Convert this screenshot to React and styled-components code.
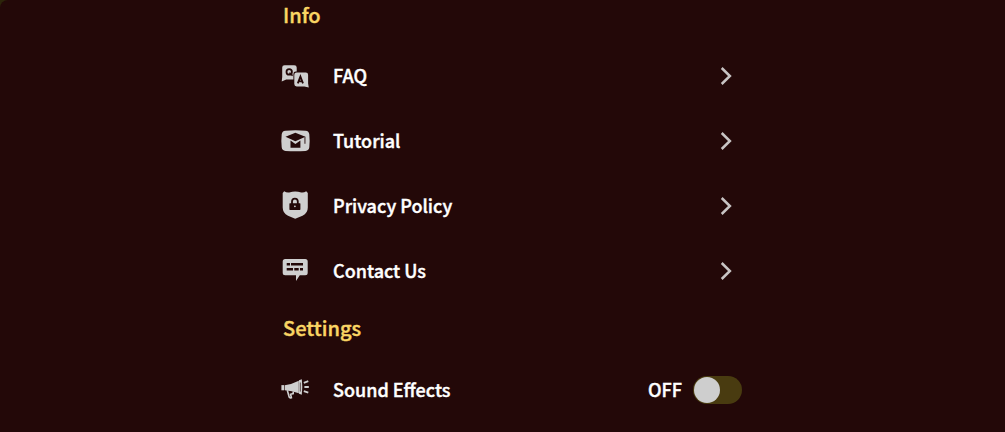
import { useState } from "react";
import styled, { createGlobalStyle } from "styled-components";

const ink = "#230808";

function FaqIcon() {
  return (
    <Icon viewBox="0 0 31 31" aria-hidden="true">
      <path d="M4.5 5.2H14.3Q16.7 5.2 16.7 7.6V11.6H15.8Q13.4 11.6 13.4 14V19.6H6.2L1.7 21.4L2.2 17V7.6Q2.2 5.2 4.5 5.2Z" />
      <path d="M16.7 12.5H25.8Q28.1 12.5 28.1 14.8V23.5L28.8 27.6L24.3 26.4H16.7Q14.3 26.4 14.3 24V14.8Q14.3 12.5 16.7 12.5Z" />
      <circle cx="9.2" cy="11.9" r="2.7" fill="none" stroke={ink} strokeWidth="1.8" />
      <path d="M9.4 12.7L12.6 15.6" stroke={ink} strokeWidth="1.5" />
      <path
        d="M17.8 23.4L20.4 16.6L23 23.4M18.8 21.4H22"
        fill="none"
        stroke={ink}
        strokeWidth="1.8"
      />
    </Icon>
  );
}

function TutorialIcon() {
  return (
    <Icon viewBox="0 0 31 31" aria-hidden="true">
      <path d="M5.5 5.7Q15.5 4.8 25.5 5.7Q29 6 29.3 9.3Q30 15.8 29.3 22.3Q29 25.6 25.5 25.9Q15.5 26.8 5.5 25.9Q2 25.6 1.7 22.3Q1 15.8 1.7 9.3Q2 6 5.5 5.7Z" />
      <g fill={ink}>
        <path d="M15.4 7.7L25.4 11.8L15.4 16.2L5.5 11.8Z" />
        <path d="M10.5 15.6L15.4 19L20.4 15.6V22.8H10.5Z" />
        <path d="M24.5 11.8H25.4V18.8H24.5Z" />
      </g>
    </Icon>
  );
}

function PrivacyIcon() {
  return (
    <Icon viewBox="0 0 31 31" aria-hidden="true">
      <path d="M4.2 1.3Q6.5 2.8 9.2 2.4Q12.4 1.6 15.2 1.6Q18 1.6 21.2 2.4Q23.9 2.8 26.2 1.3L27.8 3V17.5Q27.8 23.3 22.5 25.8L15.2 28.8L8 25.8Q2.7 23.3 2.7 17.5V3Z" />
      <path
        d="M12 14V11.5A2.9 2.9 0 0 1 17.8 11.5V14"
        fill="none"
        stroke={ink}
        strokeWidth="1.8"
      />
      <rect x="9.4" y="13.2" width="11" height="6.7" rx="0.6" fill={ink} />
      <circle cx="14.9" cy="16.3" r="0.9" />
    </Icon>
  );
}

function ContactIcon() {
  return (
    <Icon viewBox="0 0 31 31" aria-hidden="true">
      <path d="M5.2 4H25.2Q27.7 4 27.7 6.5V17.8Q27.7 20.3 25.2 20.3H19.8L16 26V20.3H5.2Q2.7 20.3 2.7 17.8V6.5Q2.7 4 5.2 4Z" />
      <path
        d="M6.7 8H10V10.6H6.7ZM11 8H23V10.6H11ZM6.7 13H13V15.5H6.7ZM14.3 13H18.7V15.5H14.3ZM20 13H23V15.5H20Z"
        fill={ink}
      />
    </Icon>
  );
}

function SoundIcon() {
  return (
    <Icon viewBox="0 0 31 31" aria-hidden="true">
      <path d="M1.4 11.1H4.1V16.3H1.4Z" />
      <path d="M4.7 11.2Q12 10.4 18.8 6.8V19.2Q12 16.6 4.7 16.3Z" />
      <path d="M19 6.2L21.8 5.3Q22.8 13 21.8 20.7L19 19.8Z" />
      <path
        d="M7.3 16.3L9.2 23.2Q9.7 24.2 11.4 23.7L10.6 20.3L13.2 19.6V17.6"
        fill="none"
        stroke="#cfcfcf"
        strokeWidth="1.6"
      />
      <path d="M20.3 8.5V17.6" stroke={ink} strokeWidth="0.7" />
      <path
        d="M23.8 8.8L28.3 7.2M24.4 13H28.8M23.8 17.2L28.3 18.6"
        stroke="#cfcfcf"
        strokeWidth="1.9"
      />
    </Icon>
  );
}

const links = [
  { label: "FAQ", href: "#faq", Glyph: FaqIcon },
  { label: "Tutorial", href: "#tutorial", Glyph: TutorialIcon },
  { label: "Privacy Policy", href: "#privacy", Glyph: PrivacyIcon },
  { label: "Contact Us", href: "#contact", Glyph: ContactIcon },
];

function App() {
  const [sound, setSound] = useState(false);

  return (
    <>
      <GlobalStyle />
      <Panel>
        <Column>
          <Heading>Info</Heading>
          <List>
            {links.map(({ label, href, Glyph }) => (
              <li key={label}>
                <RowLink href={href}>
                  <Glyph />
                  <Label>{label}</Label>
                  <Chevron viewBox="0 0 12 20" aria-hidden="true">
                    <path d="M1.7 2L9.9 10L1.7 18" />
                  </Chevron>
                </RowLink>
              </li>
            ))}
          </List>
          <Heading>Settings</Heading>
          <RowLabel>
            <SoundIcon />
            <Label>Sound Effects</Label>
            <State>{sound ? "ON" : "OFF"}</State>
            <Switch
              type="checkbox"
              role="switch"
              aria-label="Sound Effects"
              checked={sound}
              onChange={(e) => setSound(e.target.checked)}
            />
          </RowLabel>
        </Column>
      </Panel>
    </>
  );
}

const GlobalStyle = createGlobalStyle`
  * {
    box-sizing: border-box;
  }

  body {
    margin: 0;
    background: #2c240a;
    font-family: "Noto Sans CJK SC", "Open Sans", sans-serif;
    font-weight: 500;
    -webkit-text-stroke: 0.4px currentColor;
  }
`;

const Panel = styled.main`
  min-height: 100vh;
  border-top-left-radius: 8px;
  background: ${ink};
`;

const Column = styled.div`
  width: 100%;
  max-width: 479px;
  margin: 0 auto;
`;

const Heading = styled.h2`
  margin: 0 0 13px;
  padding-left: 20px;
  color: #fad564;
  font-size: 20px;
  font-weight: 500;
  line-height: 30px;
`;

const List = styled.ul`
  margin: 0 0 10px;
  padding: 0;
  list-style: none;
`;

const Row = styled.div`
  display: flex;
  align-items: center;
  height: 65px;
  padding-left: 17px;
  color: #fff;
  font-size: 18px;
  line-height: 28px;
  text-decoration: none;
  cursor: pointer;
`;

const RowLink = styled(Row).attrs({ as: "a" })`
  padding-right: 10px;
`;

const RowLabel = styled(Row).attrs({ as: "label" })`
  height: 67px;
`;

const Icon = styled.svg`
  flex: none;
  width: 31px;
  height: 31px;
  margin-right: 22px;
  fill: #cfcfcf;
`;

const Label = styled.span`
  flex: 1;
  padding-bottom: 2px;
`;

const State = styled.span`
  margin-right: 11px;
  padding-bottom: 2px;
`;

const Chevron = styled.svg`
  width: 12px;
  height: 20px;
  fill: none;
  stroke: #c8c4c4;
  stroke-width: 2.5;
`;

const Switch = styled.input`
  display: flex;
  appearance: none;
  width: 49px;
  height: 28px;
  margin: 0;
  padding: 1px;
  border-radius: 14px;
  background: #493b10;
  cursor: pointer;

  &::before {
    content: "";
    width: 26px;
    height: 26px;
    border-radius: 50%;
    background: #cecece;
  }

  &:checked {
    justify-content: flex-end;
    background: #b08a1c;
  }
`;

export default App;
